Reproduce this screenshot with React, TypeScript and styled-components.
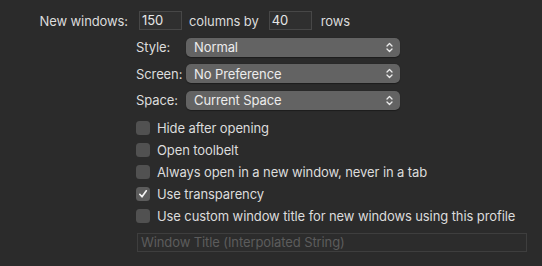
import React from "react";
import styled, { createGlobalStyle } from "styled-components";

const Global = createGlobalStyle`
  html, body {
    margin: 0;
    padding: 0;
    background: #2b2b2b;
  }
  body {
    font-family: Inter, "Noto Sans", "Liberation Sans", sans-serif;
    font-size: 13px;
    letter-spacing: -0.1px;
    color: #dcdcdc;
  }
`;

const Panel = styled.div`
  width: 542px;
  height: 266px;
  box-sizing: border-box;
  padding-top: 11px;
  background: #2b2b2b;
`;

const TopRow = styled.div`
  display: flex;
  align-items: center;
  height: 19px;
`;

const MainLabel = styled.span`
  width: 128px;
  text-align: right;
  margin-right: 11px;
`;

const Text = styled.span<{ left?: number; right?: number }>`
  margin-left: ${(p) => p.left ?? 0}px;
  margin-right: ${(p) => p.right ?? 0}px;
`;

const NumField = styled.div`
  width: 43px;
  height: 19px;
  box-sizing: border-box;
  border: 1px solid #474747;
  background: #2f2f2f;
  padding-left: 2px;
  line-height: 17px;
  color: #e6e6e6;
`;

const Indent = styled.div`
  padding-left: 136px;
  display: flex;
  flex-direction: column;
`;

const PopupRow = styled.div`
  display: flex;
  align-items: center;
  height: 19px;
  margin-top: 7.5px;
`;

const PopupLabel = styled.span`
  width: 50px;
`;

const Popup = styled.div`
  width: 214px;
  height: 19px;
  box-sizing: border-box;
  border-radius: 5px;
  background: #636363;
  color: #ececec;
  display: flex;
  align-items: center;
  justify-content: space-between;
  padding: 0 7px 0 8px;
  box-shadow: 0 0.5px 1px rgba(0, 0, 0, 0.35);
`;

const Checks = styled.div`
  margin-top: 7px;
  display: flex;
  flex-direction: column;
`;

const CheckRow = styled.div`
  display: flex;
  align-items: center;
  height: 22px;
`;

const Box = styled.div<{ checked?: boolean }>`
  width: 14px;
  height: 14px;
  box-sizing: border-box;
  border-radius: 3.5px;
  background: ${(p) => (p.checked ? "#5c5c5c" : "#515151")};
  display: flex;
  align-items: center;
  justify-content: center;
  margin-right: 7px;
`;

const TitleField = styled.div`
  margin-top: 6px;
  margin-left: 1px;
  width: 390px;
  height: 19px;
  box-sizing: border-box;
  border: 1px solid #3e3e3e;
  background: #2c2c2c;
  color: #5c5c5c;
  padding-left: 3px;
  line-height: 17px;
`;

const Chevrons = () => (
  <svg width="7" height="11" viewBox="0 0 7 11">
    <path
      d="M1 4 L3.5 1.5 L6 4 M1 7 L3.5 9.5 L6 7"
      fill="none"
      stroke="#ececec"
      strokeWidth="1.3"
      strokeLinecap="round"
      strokeLinejoin="round"
    />
  </svg>
);

const Check = () => (
  <svg width="10" height="10" viewBox="0 0 10 10">
    <path
      d="M1.8 5.3 L4 7.8 L8.3 1.8"
      fill="none"
      stroke="#f2f2f2"
      strokeWidth="1.7"
      strokeLinecap="round"
      strokeLinejoin="round"
    />
  </svg>
);

const popups = [
  { label: "Style:", value: "Normal" },
  { label: "Screen:", value: "No Preference" },
  { label: "Space:", value: "Current Space" },
];

const options = [
  { label: "Hide after opening", checked: false },
  { label: "Open toolbelt", checked: false },
  { label: "Always open in a new window, never in a tab", checked: false },
  { label: "Use transparency", checked: true },
  { label: "Use custom window title for new windows using this profile", checked: false },
];

export default function App() {
  return (
    <Panel>
      <Global />
      <TopRow>
        <MainLabel>New windows:</MainLabel>
        <NumField>150</NumField>
        <Text left={7} right={10}>columns by</Text>
        <NumField>40</NumField>
        <Text left={9}>rows</Text>
      </TopRow>
      <Indent>
        {popups.map((p) => (
          <PopupRow key={p.label}>
            <PopupLabel>{p.label}</PopupLabel>
            <Popup>
              <span>{p.value}</span>
              <Chevrons />
            </Popup>
          </PopupRow>
        ))}
        <Checks>
          {options.map((o) => (
            <CheckRow key={o.label}>
              <Box checked={o.checked}>{o.checked && <Check />}</Box>
              <span>{o.label}</span>
            </CheckRow>
          ))}
        </Checks>
        <TitleField>Window Title (Interpolated String)</TitleField>
      </Indent>
    </Panel>
  );
}
